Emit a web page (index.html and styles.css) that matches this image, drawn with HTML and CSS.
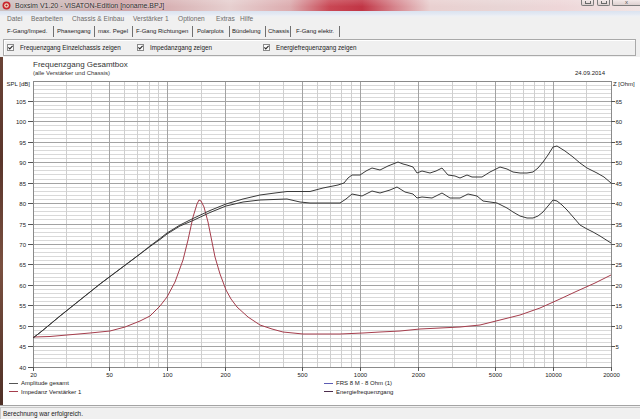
FILE: index.html
```html
<!DOCTYPE html>
<html lang="de">
<head>
<meta charset="utf-8">
<title>Boxsim V1.20 - VISATON-Edition</title>
<link rel="stylesheet" href="styles.css">
</head>
<body>
<div class="window">
  <div class="titlebar">
    <svg class="app-icon" viewBox="0 0 9 9" width="9" height="9">
      <circle cx="4.5" cy="4.5" r="4" fill="#c9232d"/>
      <circle cx="4.5" cy="4.5" r="2.3" fill="#f3e2c8"/>
      <circle cx="4.5" cy="4.5" r="1.1" fill="#b01c25"/>
    </svg>
    <span class="title">Boxsim V1.20 - VISATON-Edition [noname.BPJ]</span>
    <div class="caption-buttons">
      <span class="cb cb-min"><i></i></span>
      <span class="cb cb-max"><i></i></span>
      <span class="cb cb-close"><i>x</i></span>
    </div>
  </div>

  <div class="menubar">
    <span class="menu-item">Datei</span>
    <span class="menu-item">Bearbeiten</span>
    <span class="menu-item">Chassis &amp; Einbau</span>
    <span class="menu-item">Verstärker 1</span>
    <span class="menu-item">Optionen</span>
    <span class="menu-item">Extras</span>
    <span class="menu-item">Hilfe</span>
  </div>

  <div class="tabs">
    <span class="tab tab-active">F-Gang/Imped.</span>
    <span class="tab">Phasengang</span>
    <span class="tab">max. Pegel</span>
    <span class="tab">F-Gang Richtungen</span>
    <span class="tab">Polarplots</span>
    <span class="tab">Bündelung</span>
    <span class="tab">Chassis</span>
    <span class="tab">F-Gang elektr.</span>
  </div>

  <div class="options-wrap">
    <div class="options">
      <label class="opt"><span class="check"><svg viewBox="0 0 7 7" width="7" height="7"><path d="M1.4 3.4l1.4 1.5 2.8-3"/></svg></span>Frequenzgang Einzelchassis zeigen</label>
      <label class="opt"><span class="check"><svg viewBox="0 0 7 7" width="7" height="7"><path d="M1.4 3.4l1.4 1.5 2.8-3"/></svg></span>Impedanzgang zeigen</label>
      <label class="opt"><span class="check"><svg viewBox="0 0 7 7" width="7" height="7"><path d="M1.4 3.4l1.4 1.5 2.8-3"/></svg></span>Energiefrequenzgang zeigen</label>
    </div>
  </div>

  <div class="chart-frame">
    <div class="frame-edge"></div>
    <div class="chart">
      <div class="chart-head">
        <div class="chart-titles">
          <div class="chart-title">Frequenzgang Gesamtbox</div>
          <div class="chart-sub">(alle Verstärker und Chassis)</div>
        </div>
        <div class="chart-date">24.09.2014</div>
      </div>

      <svg class="plot" viewBox="3 79 637 300" width="637" height="300">
        <path class="grid-minor" d="M33 362.5h578M33 358.5h578M33 354.5h578M33 350.5h578M33 342.5h578M33 338.5h578M33 334.5h578M33 330.5h578M33 322.5h578M33 317.5h578M33 313.5h578M33 309.5h578M33 301.5h578M33 297.5h578M33 293.5h578M33 289.5h578M33 281.5h578M33 277.5h578M33 273.5h578M33 268.5h578M33 260.5h578M33 256.5h578M33 252.5h578M33 248.5h578M33 240.5h578M33 236.5h578M33 232.5h578M33 228.5h578M33 219.5h578M33 215.5h578M33 211.5h578M33 207.5h578M33 199.5h578M33 195.5h578M33 191.5h578M33 187.5h578M33 179.5h578M33 174.5h578M33 170.5h578M33 166.5h578M33 158.5h578M33 154.5h578M33 150.5h578M33 146.5h578M33 138.5h578M33 134.5h578M33 130.5h578M33 125.5h578M33 117.5h578M33 113.5h578M33 109.5h578M33 105.5h578M33 97.5h578M33 93.5h578M33 89.5h578M33 85.5h578"/>
        <path class="grid-vminor" d="M66.5 81v286M91.5 81v286M124.5 81v286M137.5 81v286M149.5 81v286M158.5 81v286M201.5 81v286M259.5 81v286M283.5 81v286M317.5 81v286M330.5 81v286M341.5 81v286M351.5 81v286M394.5 81v286M452.5 81v286M476.5 81v286M510.5 81v286M523.5 81v286M534.5 81v286M544.5 81v286M586.5 81v286"/>
        <path class="grid-major" d="M33 346.5h578M33 326.5h578M33 305.5h578M33 285.5h578M33 264.5h578M33 244.5h578M33 224.5h578M33 203.5h578M33 183.5h578M33 162.5h578M33 142.5h578M33 121.5h578M33 101.5h578M109.5 81v286M167.5 81v286M225.5 81v286M302.5 81v286M360.5 81v286M418.5 81v286M495.5 81v286M553.5 81v286"/>
        <path class="axis" d="M33.5 81.5H611.5V367.5H33.5Z"/>
        <path class="ticks" d="M28 101.5h5M28 121.5h5M28 142.5h5M28 162.5h5M28 183.5h5M28 203.5h5M28 224.5h5M28 244.5h5M28 264.5h5M28 285.5h5M28 305.5h5M28 326.5h5M28 346.5h5M28 367.5h5M611 101.5h4M611 121.5h4M611 142.5h4M611 162.5h4M611 183.5h4M611 203.5h4M611 224.5h4M611 244.5h4M611 264.5h4M611 285.5h4M611 305.5h4M611 326.5h4M611 346.5h4M33.5 367v4M109.5 367v4M167.5 367v4M225.5 367v4M302.5 367v4M360.5 367v4M418.5 367v4M495.5 367v4M553.5 367v4M611.5 367v4"/>

        <polyline class="curve-imp" points="33,337 50,336.5 67,335 90,333 110,331 125,327 140,321 150,316 160,306 167,297 175,282 183,260 188,240 193,217 197,204 199,200 201,201 204,207 208,222 215,257 220,274 226,290 231,299 237,307 248,317 260,325 272,329 283,332 303,334 340,334 363,333 380,332 400,331 420,329 440,328 460,327 480,325 500,320 520,315 540,308 560,299 575,292 595,283 611,275"/>
        <polyline class="curve" points="33,338 42,331 60,316 80,300 100,284 120,269 140,254 150,246 160,238.5 167,233 180,225 193,218.5 210,210.5 226,204 243,199 260,195 275,193 287,191.5 310,191.5 323,188 338,185 344,183 348,178 352,175 360,175 366,171 372,168 380,170 388,166 398,162 403,164 407,165 413,167 417,173 422,171 430,173 436,171 442,168 448,175 455,176 460,178 467,175 472,177 482,177 490,172 500,167 507,169 513,172 520,173 527,173 533,172 538,168 543,162 548,155 553,147 557,146 565,151 573,157 580,163 587,168 597,173 604,177 611,183"/>
        <polyline class="curve" points="33,338 42,331 60,316 80,300 100,284 120,269 140,254 150,246.5 160,239.5 167,234 180,226 193,220.5 210,212.5 226,206 243,202 260,200 287,199 300,202 310,203 340,203 346,199 352,194 362,196 372,191 380,193 390,190 397,187 405,192 413,194 417,198 422,197 432,198 442,193 450,198 460,198 468,194 477,196 483,201 490,202 497,203 507,208 513,212 520,216 527,218 533,218 538,216 543,212 548,206 553,200 557,201 562,205 567,210 574,218 580,225 587,229 593,232 600,236 611,243"/>

        <g class="lbl lbl-left">
          <text x="30" y="85.5">SPL [dB]</text>
          <text x="26" y="103.5">105</text>
          <text x="26" y="123.5">100</text>
          <text x="26" y="144.5">95</text>
          <text x="26" y="164.5">90</text>
          <text x="26" y="185.5">85</text>
          <text x="26" y="205.5">80</text>
          <text x="26" y="226.5">75</text>
          <text x="26" y="246.5">70</text>
          <text x="26" y="266.5">65</text>
          <text x="26" y="287.5">60</text>
          <text x="26" y="307.5">55</text>
          <text x="26" y="328.5">50</text>
          <text x="26" y="348.5">45</text>
          <text x="26" y="369.5">40</text>
        </g>
        <g class="lbl lbl-right">
          <text x="613" y="85.5">Z [Ohm]</text>
          <text x="615.5" y="103.5">65</text>
          <text x="615.5" y="123.5">60</text>
          <text x="615.5" y="144.5">55</text>
          <text x="615.5" y="164.5">50</text>
          <text x="615.5" y="185.5">45</text>
          <text x="615.5" y="205.5">40</text>
          <text x="615.5" y="226.5">35</text>
          <text x="615.5" y="246.5">30</text>
          <text x="615.5" y="266.5">25</text>
          <text x="615.5" y="287.5">20</text>
          <text x="615.5" y="307.5">15</text>
          <text x="615.5" y="328.5">10</text>
          <text x="615.5" y="348.5">5</text>
        </g>
        <g class="lbl lbl-bottom">
          <text x="33.5" y="376.5">20</text>
          <text x="109.5" y="376.5">50</text>
          <text x="167.5" y="376.5">100</text>
          <text x="225.5" y="376.5">200</text>
          <text x="302.5" y="376.5">500</text>
          <text x="360.5" y="376.5">1000</text>
          <text x="418.5" y="376.5">2000</text>
          <text x="495.5" y="376.5">5000</text>
          <text x="553.5" y="376.5">10000</text>
          <text x="611.5" y="376.5">20000</text>
        </g>
      </svg>

      <div class="legend">
        <div class="leg"><span class="leg-line leg-amp"></span>Amplitude gesamt</div>
        <div class="leg"><span class="leg-line leg-frs"></span>FRS 8 M - 8 Ohm (1)</div>
        <div class="leg"><span class="leg-line leg-imp"></span>Impedanz Verstärker 1</div>
        <div class="leg"><span class="leg-line leg-ene"></span>Energiefrequenzgang</div>
      </div>
    </div>
  </div>

  <div class="statusbar"><span class="status-panel">Berechnung war erfolgreich.</span></div>
</div>
</body>
</html>
```

FILE: styles.css
```css
* { box-sizing: border-box; margin: 0; padding: 0; }
html, body { width: 640px; height: 419px; overflow: hidden; }
body {
  font-family: "Liberation Sans", Arial, sans-serif;
  background: #f0f0f0;
  color: #222;
}
.window {
  display: flex;
  flex-direction: column;
  width: 640px;
  height: 419px;
}

/* ---------- title bar ---------- */
.titlebar {
  flex: none;
  height: 11px;
  display: flex;
  align-items: center;
  padding-left: 2px;
  background:
    linear-gradient(180deg, rgba(255,255,255,0.15), rgba(255,255,255,0) 60%),
    linear-gradient(90deg, #cdc2c2 0px, #cdb8b8 60px, #cea2a5 120px, #d8b2b4 170px, #e6cfcf 230px, #dcacaf 290px, #c94754 330px, #c13545 362px, #d6858d 395px, #e9d0d0 430px, #e8d5d5 500px, #eed6d8 560px, #f1e5e5 640px);
}
.app-icon { flex: none; margin-right: 4px; }
.title {
  font-size: 7px;
  line-height: 11px;
  color: #2b2b2b;
  white-space: nowrap;
  text-shadow: 0 0 2px rgba(255,255,255,0.9);
}
.caption-buttons {
  margin-left: auto;
  align-self: flex-start;
  display: flex;
}
.cb {
  height: 6px;
  border: 1px solid #7c7c7c;
  border-top: none;
  border-radius: 0 0 2px 2px;
  background: linear-gradient(#f3e9e9, #ddd0d0);
  display: flex;
  justify-content: center;
  align-items: flex-end;
}
.cb-min { width: 13px; margin-right: 3px; }
.cb-max { width: 13px; margin-right: 2px; }
.cb-close { width: 28px; border-right: none; border-radius: 0 0 0 2px; }
.cb i {
  display: block;
  font-style: normal;
  font-size: 6px;
  line-height: 5px;
  color: #555;
}
.cb-min i, .cb-max i {
  width: 6px;
  height: 3px;
  border: 1px solid #6a6a6a;
  border-top: none;
  margin-bottom: 1px;
}

/* ---------- menu ---------- */
.menubar {
  flex: none;
  height: 14px;
  display: flex;
  align-items: center;
  padding-left: 7px;
  padding-top: 1px;
  font-size: 6.6px;
  color: #6b6b6b;
  white-space: nowrap;
  background: linear-gradient(180deg, #dbe3f0 0px, #e3e9f3 3px, #eef0f4 5px, #f0f0f0 7px);
}
.menu-item:nth-child(1) { width: 24px; }
.menu-item:nth-child(2) { width: 41px; }
.menu-item:nth-child(3) { width: 61px; }
.menu-item:nth-child(4) { width: 45px; }
.menu-item:nth-child(5) { width: 38px; }
.menu-item:nth-child(6) { width: 24px; }

/* ---------- tabs ---------- */
.tabs {
  flex: none;
  height: 13px;
  display: flex;
  align-items: flex-start;
  padding-top: 1px;
  font-size: 6px;
  color: #1e1e1e;
  white-space: nowrap;
}
.tab {
  height: 11px;
  line-height: 10px;
  border-right: 1px solid #707070;
  overflow: hidden;
}
.tab:nth-child(1) { width: 54px; padding-left: 7px; }
.tab:nth-child(2) { width: 41px; padding-left: 3px; }
.tab:nth-child(3) { width: 38px; padding-left: 3px; }
.tab:nth-child(4) { width: 60px; padding-left: 3px; }
.tab:nth-child(5) { width: 37px; padding-left: 4px; }
.tab:nth-child(6) { width: 36px; padding-left: 2px; }
.tab:nth-child(7) { width: 25px; padding-left: 2px; }
.tab:nth-child(8) { width: 49px; padding-left: 5px; }

/* ---------- options ---------- */
.options-wrap {
  flex: none;
  height: 19px;
  padding: 1px 4px 1px 3px;
}
.options {
  height: 17px;
  border: 1px solid #a9a9a9;
  box-shadow: inset 1px 1px 0 #ffffff;
  display: flex;
  align-items: center;
  padding-left: 3px;
  font-size: 6.3px;
  color: #222;
  white-space: nowrap;
}
.opt { display: flex; align-items: center; }
.opt:nth-child(1) { width: 130px; }
.opt:nth-child(2) { width: 126px; }
.check {
  width: 7px;
  height: 7px;
  border: 1px solid #8a8a8a;
  background: #fbfbfb;
  margin-right: 6px;
  display: block;
  position: relative;
}
.check svg { position: absolute; left: -1px; top: -1px; }
.check path { fill: none; stroke: #2a2a2a; stroke-width: 1.1; }

/* ---------- chart ---------- */
.chart-frame {
  flex: none;
  height: 349px;
  display: flex;
  border-bottom: 1px solid #a4a4a4;
}
.frame-edge {
  width: 3px;
  background: linear-gradient(180deg, #6a4336 0%, #5a352b 30%, #7a5040 60%, #4e2f26 100%);
}
.chart {
  flex: 1;
  background: #ffffff;
  display: flex;
  flex-direction: column;
}
.chart-head {
  height: 22px;
  display: flex;
  justify-content: space-between;
  padding: 3px 35px 0 30px;
}
.chart-title { font-size: 8px; line-height: 10px; color: #333; }
.chart-sub { font-size: 6px; line-height: 7px; color: #333; }
.chart-date { font-size: 6px; line-height: 7px; margin-top: 10px; color: #222; }

.plot { display: block; flex: none; }
.grid-minor { stroke: #d9d9d9; stroke-width: 1; fill: none; shape-rendering: crispEdges; }
.grid-vminor { stroke: #cfcfcf; stroke-width: 1; fill: none; shape-rendering: crispEdges; }
.grid-major { stroke: #a3a3a3; stroke-width: 1; fill: none; shape-rendering: crispEdges; }
.axis { stroke: #8a8a8a; stroke-width: 1; fill: none; shape-rendering: crispEdges; }
.ticks { stroke: #555; stroke-width: 1; fill: none; shape-rendering: crispEdges; }
.curve { fill: none; stroke: #3a3a3a; stroke-width: 1; stroke-linejoin: round; }
.curve-imp { fill: none; stroke: #a53d4c; stroke-width: 1; stroke-linejoin: round; }
.lbl { font-family: "Liberation Sans", Arial, sans-serif; font-size: 6px; fill: #222; }
.lbl-left { text-anchor: end; }
.lbl-right { text-anchor: start; }
.lbl-bottom { text-anchor: middle; }

.legend {
  display: grid;
  grid-template-columns: 315px 1fr;
  grid-auto-rows: 8.5px;
  padding-left: 6px;
  font-size: 6px;
  line-height: 8.5px;
  color: #222;
}
.leg { display: flex; align-items: center; white-space: nowrap; }
.leg-line { width: 9px; height: 1px; margin-right: 3px; }
.leg-amp { background: #555555; }
.leg-imp { background: #a53d4c; }
.leg-frs { background: #5c5cb4; }
.leg-ene { background: #4d2d4d; }

/* ---------- status ---------- */
.statusbar {
  flex: none;
  height: 13px;
  padding-top: 1px;
}
.status-panel {
  display: block;
  height: 12px;
  border-top: 1px solid #c8c8c8;
  border-left: 1px solid #c8c8c8;
  padding-left: 2px;
  font-size: 6.4px;
  line-height: 11px;
  color: #222;
  white-space: nowrap;
}
```
